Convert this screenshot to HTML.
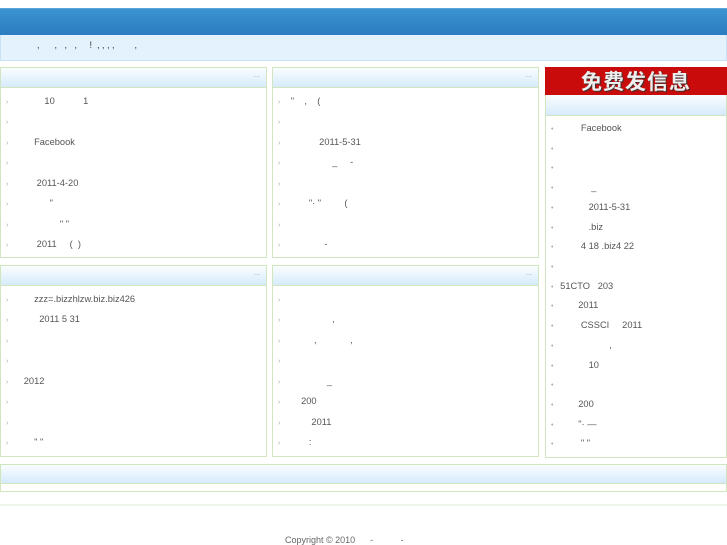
<!DOCTYPE html>
<html><head><meta charset="utf-8"><style>
body{margin:0;width:727px;height:545px;position:relative;background:#fff;font-family:"Liberation Sans","Noto Sans CJK SC",sans-serif;font-size:9px;color:#555;overflow:hidden}
.a{position:absolute;white-space:pre}
.p{position:absolute;border:1px solid #cfe6bf;box-sizing:border-box;background:#fff}
.h{height:19px;background:linear-gradient(#fafdff,#d6ebfb);border-bottom:1px solid #cfe6bf;position:relative}
.h i{position:absolute;right:6px;top:4px;font-style:normal;color:#999;font-size:7px}
.r{position:absolute;left:5px;white-space:pre;font-size:9.3px}
.r b{font-weight:normal;color:#aaa;font-size:7px;display:inline-block;width:0}
.L .r span{padding-left:10px}
.M .r span{padding-left:5px}
.R .r span{padding-left:4px}
</style></head><body>
<div class="a" style="left:0;top:8px;width:727px;height:27px;background:linear-gradient(#3b93d0,#2a7cbf);border-top:1px solid #5aa6dc"></div>
<div class="a" style="left:0;top:35px;width:725px;height:25px;background:#e4f2fd;border:1px solid #c8e2f6;border-top:none"></div>
<div class="a" style="left:37px;top:40px;font-size:9px;color:#333">,      ,   ,   ,     !  , , , ,        ,</div>

<div class="p L" style="left:0;top:67px;width:267px;height:191px"><div class="h"><i>...</i></div>
<div class="r" style="top:28px"><b>›</b><span>           10           1</span></div>
<div class="r" style="top:48px"><b>›</b></div>
<div class="r" style="top:69px"><b>›</b><span>       Facebook</span></div>
<div class="r" style="top:89px"><b>›</b></div>
<div class="r" style="top:110px"><b>›</b><span>        2011-4-20</span></div>
<div class="r" style="top:130px"><b>›</b><span>             "</span></div>
<div class="r" style="top:151px"><b>›</b><span>                 " "</span></div>
<div class="r" style="top:171px"><b>›</b><span>        2011     (  )</span></div>
</div>
<div class="p M" style="left:272px;top:67px;width:267px;height:191px"><div class="h"><i>...</i></div>
<div class="r" style="top:28px"><b>›</b><span>   "    ,    (</span></div>
<div class="r" style="top:48px"><b>›</b></div>
<div class="r" style="top:69px"><b>›</b><span>              2011-5-31</span></div>
<div class="r" style="top:89px"><b>›</b><span>                   _     -</span></div>
<div class="r" style="top:110px"><b>›</b></div>
<div class="r" style="top:130px"><b>›</b><span>          "· "         (</span></div>
<div class="r" style="top:151px"><b>›</b></div>
<div class="r" style="top:171px"><b>›</b><span>                -</span></div>
</div>
<div class="p L" style="left:0;top:265px;width:267px;height:192px"><div class="h"><i>...</i></div>
<div class="r" style="top:28px"><b>›</b><span>       zzz=.bizzhlzw.biz.biz426</span></div>
<div class="r" style="top:48px"><b>›</b><span>         2011 5 31</span></div>
<div class="r" style="top:69px"><b>›</b></div>
<div class="r" style="top:89px"><b>›</b></div>
<div class="r" style="top:110px"><b>›</b><span>   2012</span></div>
<div class="r" style="top:130px"><b>›</b></div>
<div class="r" style="top:151px"><b>›</b></div>
<div class="r" style="top:171px"><b>›</b><span>       " "</span></div>
</div>
<div class="p M" style="left:272px;top:265px;width:267px;height:192px"><div class="h"><i>...</i></div>
<div class="r" style="top:28px"><b>›</b></div>
<div class="r" style="top:48px"><b>›</b><span>                   ,</span></div>
<div class="r" style="top:69px"><b>›</b><span>            ,             ,</span></div>
<div class="r" style="top:89px"><b>›</b></div>
<div class="r" style="top:110px"><b>›</b><span>                 _</span></div>
<div class="r" style="top:130px"><b>›</b><span>       200</span></div>
<div class="r" style="top:151px"><b>›</b><span>           2011</span></div>
<div class="r" style="top:171px"><b>›</b><span>          :</span></div>
</div>
<div class="a" style="left:545px;top:67px;width:182px;height:28px;background:#c90b0b;color:#eee;font-weight:bold;font-size:21px;text-align:center;line-height:28px;text-shadow:1px 1px 1px #333;font-family:'Noto Sans CJK SC',sans-serif;letter-spacing:1px">免费发信息</div>
<div class="p R" style="left:545px;top:95px;width:182px;height:363px;border-top:none"><div class="h" style="height:20px"></div>
<div class="r" style="top:28px"><b>•</b><span>          Facebook</span></div>
<div class="r" style="top:48px"><b>•</b></div>
<div class="r" style="top:67px"><b>•</b></div>
<div class="r" style="top:87px"><b>•</b><span>              _</span></div>
<div class="r" style="top:107px"><b>•</b><span>             2011-5-31</span></div>
<div class="r" style="top:127px"><b>•</b><span>             .biz</span></div>
<div class="r" style="top:146px"><b>•</b><span>          4 18 .biz4 22</span></div>
<div class="r" style="top:166px"><b>•</b></div>
<div class="r" style="top:186px"><b>•</b><span>  51CTO   203</span></div>
<div class="r" style="top:205px"><b>•</b><span>         2011</span></div>
<div class="r" style="top:225px"><b>•</b><span>          CSSCI     2011</span></div>
<div class="r" style="top:245px"><b>•</b><span>                     ,</span></div>
<div class="r" style="top:265px"><b>•</b><span>             10</span></div>
<div class="r" style="top:284px"><b>•</b></div>
<div class="r" style="top:304px"><b>•</b><span>         200</span></div>
<div class="r" style="top:324px"><b>•</b><span>         "· —</span></div>
<div class="r" style="top:343px"><b>•</b><span>          " "</span></div>
</div>
<div class="p" style="left:0;top:464px;width:727px;height:28px"><div class="h" style="height:18px"></div></div>
<div class="a" style="left:0;top:504px;width:727px;height:2px;background:#eef6ea"></div>
<div class="a" style="left:285px;top:535px;color:#666">Copyright © 2010      -           -</div>
</body></html>
